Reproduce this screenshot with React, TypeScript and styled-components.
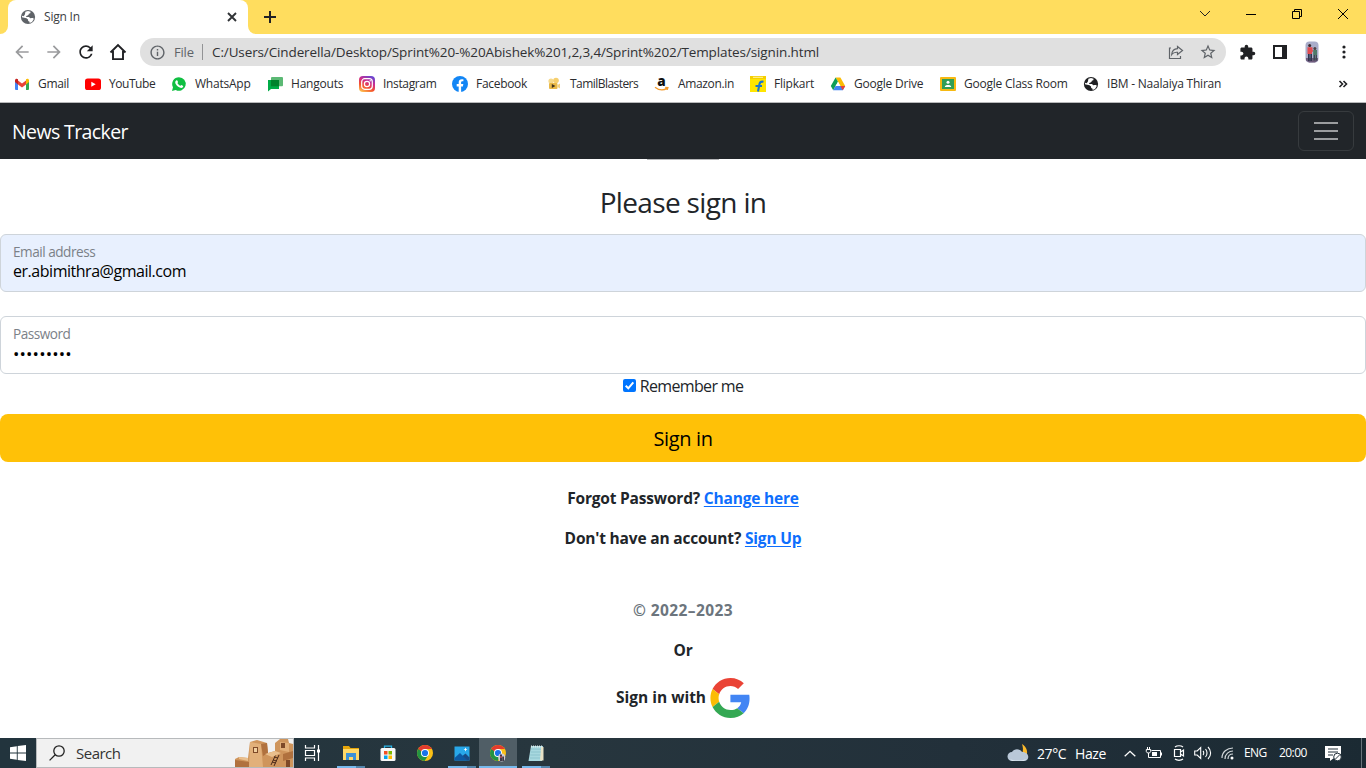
import React from "react";
import styled, { createGlobalStyle } from "styled-components";
import { MdArrowBack, MdArrowForward, MdExtension, MdInfoOutline, MdRefresh, MdStarBorder } from "react-icons/md";

const GlobalStyle = createGlobalStyle`
  * { box-sizing: border-box; }
  body { margin: 0; background: #fff; overflow: hidden; }
  body, input, button { font-family: "Open Sans", "Noto Sans", sans-serif; }
  svg { display: block; flex: none; overflow: visible; }
`;

const Screen = styled.div`
  width: 1366px;
  height: 768px;
  display: flex;
  flex-direction: column;
  overflow: hidden;
  color: #212529;
`;

/* ---------- browser chrome ---------- */
const TabStrip = styled.div`
  height: 34px;
  flex: none;
  display: flex;
  background: #ffdd5e;
`;
const TabEdge = styled.div<{ $side: "left" | "right" }>`
  width: 8px;
  background: #fff;
  &::after {
    content: "";
    display: block;
    height: 34px;
    background: #ffdd5e;
    border-radius: ${(p) => (p.$side === "left" ? "0 0 8px 0" : "0 0 0 8px")};
  }
`;
const Tab = styled.div`
  width: 240px;
  display: flex;
  align-items: center;
  padding: 0 10px 0 12px;
  background: #fff;
  border-radius: 8px 8px 0 0;
`;
const TabTitle = styled.span`
  flex: 1;
  margin-left: 8px;
  padding-bottom: 1px;
  font-size: 12px;
  letter-spacing: -0.2px;
  color: #3c4043;
`;
const NewTab = styled.div`
  width: 28px;
  display: flex;
  align-items: center;
  justify-content: center;
`;
const WindowControls = styled.div`
  margin-left: auto;
  display: flex;
  height: 28px;
`;
const WindowButton = styled.div`
  width: 46px;
  display: flex;
  align-items: center;
  justify-content: center;
`;
const Toolbar = styled.div`
  height: 36px;
  flex: none;
  display: flex;
  align-items: center;
  padding-left: 12px;
  color: #202124;
`;
const NavButton = styled.div<{ $off?: boolean }>`
  width: 20px;
  margin-right: 12px;
  display: flex;
  justify-content: center;
  color: ${(p) => (p.$off ? "#9a9b9d" : "#202124")};
`;
const Omnibox = styled.div`
  width: 1086px;
  height: 28px;
  border-radius: 14px;
  background: #e0e0e0;
  display: flex;
  align-items: center;
  padding: 0 9px 0 9px;
  color: #5f6368;
  font-size: 14px;
`;
const Scheme = styled.span`
  margin-left: 8px;
  width: 20px;
  font-size: 13px;
  letter-spacing: -0.2px;
`;
const Separator = styled.span`
  width: 1px;
  height: 16px;
  margin: 0 9px 0 8px;
  background: #929395;
`;
const Url = styled.span`
  flex: 1;
  color: #303134;
  font-size: 13.5px;
  letter-spacing: -0.12px;
  white-space: nowrap;
`;
const OmniActions = styled.div`
  display: flex;
  gap: 14px;
  align-items: center;
`;
const Extensions = styled.div`
  display: flex;
  align-items: center;
  padding-left: 13px;
`;
const ExtensionSlot = styled.div<{ $w: number }>`
  width: ${(p) => p.$w}px;
`;
const Bookmarks = styled.div`
  height: 33px;
  flex: none;
  display: flex;
  align-items: center;
  padding: 0 18px 5px 14px;
  border-bottom: 1px solid #b8b9ba;
`;
const Bookmark = styled.div<{ $w: number; $ls?: number }>`
  width: ${(p) => p.$w}px;
  flex: none;
  display: flex;
  align-items: center;
  gap: 8px;
  font-size: 12px;
  letter-spacing: ${(p) => p.$ls ?? -0.22}px;
  white-space: nowrap;
  color: #2b2c2f;
`;
const Overflow = styled.div`
  margin-left: auto;
`;

/* ---------- page ---------- */
const Navbar = styled.nav`
  height: 56px;
  flex: none;
  display: flex;
  align-items: center;
  justify-content: space-between;
  padding: 0 12px;
  background: #212529;
`;
const Brand = styled.span`
  font-size: 19.5px;
  letter-spacing: -0.6px;
  color: #fff;
`;
const Toggler = styled.button`
  width: 56px;
  height: 40px;
  padding: 0;
  display: flex;
  align-items: center;
  justify-content: center;
  background: none;
  border: 1px solid #373b3e;
  border-radius: 6px;
`;
const Page = styled.main`
  flex: 1;
  min-height: 0;
  display: flex;
  flex-direction: column;
  align-items: center;
`;
const LogoEdge = styled.div`
  width: 72px;
  height: 1px;
  flex: none;
  background: #b5b6b8;
`;
const Heading = styled.h1`
  margin: 25px 0 15px;
  height: 34px;
  font-size: 28px;
  font-weight: 400;
  line-height: 34px;
  letter-spacing: -0.65px;
`;
const Field = styled.label<{ $filled?: boolean }>`
  width: 100%;
  height: 58px;
  flex: none;
  display: flex;
  flex-direction: column;
  padding: 8px 12px;
  border: 1px solid #ced4da;
  border-radius: 6px;
  background: ${(p) => (p.$filled ? "#e8f0fe" : "#fff")};
  margin-bottom: ${(p) => (p.$filled ? 24 : 0)}px;
`;
const FieldLabel = styled.span`
  font-size: 13.6px;
  line-height: 18px;
  letter-spacing: -0.48px;
  color: #7b8188;
`;
const FieldValue = styled.span<{ $secret?: boolean }>`
  font-size: ${(p) => (p.$secret ? 17 : 16)}px;
  line-height: ${(p) => (p.$secret ? 22 : 20)}px;
  letter-spacing: ${(p) => (p.$secret ? 0.15 : -0.47)}px;
  color: #000;
`;
const Remember = styled.div`
  height: 24px;
  flex: none;
  display: flex;
  align-items: center;
  gap: 4px;
  font-size: 16px;
  letter-spacing: -0.65px;
`;
const Checkbox = styled.svg`
  margin-top: -1px;
`;
const Submit = styled.button`
  width: 100%;
  height: 48px;
  flex: none;
  margin: 16px 0 24px;
  padding: 0;
  border: 0;
  border-radius: 8px;
  background: #ffc107;
  color: #000;
  font-size: 20px;
  letter-spacing: -0.35px;
`;
const Line = styled.p<{ $gap?: number; $muted?: boolean; $ls?: number }>`
  height: 24px;
  flex: none;
  margin: 0 0 ${(p) => p.$gap ?? 16}px;
  font-size: 15.5px;
  font-weight: 700;
  line-height: 24px;
  letter-spacing: ${(p) => p.$ls ?? -0.19}px;
  color: ${(p) => (p.$muted ? "#6c757d" : "#212529")};
  white-space: nowrap;
`;
const Link = styled.a`
  color: #0d6efd;
  text-decoration: underline;
  text-underline-offset: 2px;
`;
const GoogleRow = styled.div`
  height: 40px;
  flex: none;
  display: flex;
  gap: 4px;
`;
const GoogleText = styled(Line)`
  margin: 7px 0 0;
`;

/* ---------- taskbar ---------- */
const Taskbar = styled.footer`
  height: 30px;
  flex: none;
  display: flex;
  background: linear-gradient(90deg, #22343d, #27363e 40%, #22303a 70%, #1b2a33);
  color: #fff;
`;
const Start = styled.div`
  width: 36px;
  display: flex;
  align-items: center;
  justify-content: center;
`;
const SearchBox = styled.div`
  width: 258px;
  display: flex;
  align-items: center;
  border: 1px solid #b7babc;
  background: #f1f1f1;
  padding-left: 12px;
  color: #333;
  font-size: 15px;
  letter-spacing: -0.5px;
`;
const SearchText = styled.span`
  margin-left: 11px;
  flex: 1;
`;
const Task = styled.div<{ $active?: boolean; $open?: boolean; $w?: number }>`
  width: ${(p) => p.$w ?? 37}px;
  display: flex;
  flex-direction: column;
  align-items: center;
  justify-content: space-between;
  padding-top: 6px;
  background: ${(p) => (p.$active ? "#505e66" : "transparent")};
  &::after {
    content: "";
    width: ${(p) => (p.$active ? "100%" : "28px")};
    height: 2px;
    background: ${(p) =>
      p.$active ? "#76b9ed" : p.$open ? "linear-gradient(90deg, #76b9ed 19px, #5486ac 19px)" : "transparent"};
  }
`;
const Tray = styled.div`
  margin-left: auto;
  display: flex;
  align-items: center;
  font-size: 12px;
  white-space: nowrap;
`;
const TrayItem = styled.div<{ $w: number }>`
  width: ${(p) => p.$w}px;
  flex: none;
`;
const Weather = styled(TrayItem)`
  font-size: 14px;
  letter-spacing: -0.4px;
`;
const TrayText = styled(TrayItem)`
  letter-spacing: -0.55px;
  padding-bottom: 1px;
`;
const ShowDesktop = styled.div`
  width: 5px;
  height: 30px;
  border-left: 1px solid #68747b;
`;

const Globe = ({ color }: { color: string }) => (
  <svg width="16" height="16" viewBox="0 0 16 16">
    <circle cx="8" cy="8" r="7.1" fill={color} />
    <path d="M5.4 2.7 8 2l2.6.7-.3 1.500-1.500.5-.4 1.500-1.700.5-.8 1.300h3.200l1.200 1.200 2.900-.4.5 1.500-1.700 2.700-2.400 1.100v-1.400L8.200 12 8 10.500 6.500 9.300 2 8.200 2.100 6.700l1.600.6 1.200-1.900z" fill="#fff" />
    <path d="M8.600 6.100h3l2 1.300v1.400l-3 .1L9.400 8H6.600z" fill={color} />
  </svg>
);

const GoogleG = ({ size }: { size: number }) => (
  <svg width={size} height={size} viewBox="0 0 47 48">
    <path fill="#EA4335" d="M24 9.5c3.54 0 6.71 1.22 9.21 3.6l6.85-6.85C35.9 2.38 30.47 0 24 0 14.62 0 6.51 5.38 2.56 13.22l7.98 6.19C12.43 13.72 17.74 9.5 24 9.5z" />
    <path fill="#4285F4" d="M46.98 24.55c0-1.57-.15-3.09-.38-4.55H24v9.02h12.94c-.58 2.96-2.26 5.48-4.78 7.18l7.73 6c4.51-4.18 7.09-10.36 7.09-17.65z" />
    <path fill="#FBBC05" d="M10.53 28.59c-.48-1.45-.76-2.99-.76-4.59s.27-3.14.76-4.59l-7.98-6.19C.92 16.46 0 20.12 0 24c0 3.88.92 7.54 2.56 10.78l7.97-6.19z" />
    <path fill="#34A853" d="M24 48c6.48 0 11.93-2.13 15.89-5.81l-7.73-6c-2.15 1.45-4.92 2.3-8.16 2.3-6.26 0-11.57-4.22-13.47-9.91l-7.98 6.19C6.51 42.62 14.62 48 24 48z" />
  </svg>
);

const ChromeIcon = ({ badge }: { badge?: boolean }) => (
  <svg width="18" height="18" viewBox="0 0 18 18">
    <circle cx="9" cy="9" r="8" fill="#fbc116" />
    <path d="M2.1 5A8 8 0 0 0 8.6 17L12.4 11 9 9z" fill="#229342" />
    <path d="M2.1 5A8 8 0 0 1 15.9 5H9L6 8z" fill="#e33b2e" />
    <path d="M2.1 5 5.600 11 9 9 6 8z" fill="#229342" />
    <circle cx="9" cy="9" r="4" fill="#fff" />
    <circle cx="9" cy="9" r="3.1" fill="#1a73e8" />
    {badge && (
      <>
        <ellipse cx="12.7" cy="13.5" rx="3.5" ry="4" fill="#d0ccd6" />
        <path d="M11 11.500h2v2.500h-2z" fill="#9d4a55" />
        <path d="M13.200 12.500H15V17h-1.800zM11 10.500h2V12h-2zM11 14h2v3h-2z" fill="#403a48" />
      </>
    )}
  </svg>
);

const icons: Record<string, React.ReactNode> = {
  gmail: (
    <svg width="16" height="16" viewBox="0 0 16 16">
      <path d="M1 4h3v10H2a1 1 0 0 1-1-1z" fill="#4285f4" />
      <path d="M12 4h3v9a1 1 0 0 1-1 1h-2z" fill="#34a853" />
      <path d="M4 4.400 8 7.600l4-3.200v4L8 11.500 4 8.400z" fill="#ea4335" />
      <path d="M1 4.500C1 2.800 2.800 2.300 4 3.300v5.100L1 6z" fill="#c5221f" />
      <path d="M15 4.500c0-1.700-1.800-2.200-3-1.200v5.100L15 6z" fill="#fbbc04" />
    </svg>
  ),
  youtube: (
    <svg width="16" height="16" viewBox="0 0 16 16">
      <rect y="2.500" width="16" height="11.500" rx="2.600" fill="#f00" />
      <path d="m6.300 5.700 4.400 2.500-4.400 2.500z" fill="#fff" />
    </svg>
  ),
  whatsapp: (
    <svg width="16" height="16" viewBox="0 0 16 16">
      <path d="M8 1.200A6.800 6.800 0 1 1 4.700 14L1 15l1-3.700A6.800 6.800 0 0 1 8 1.200z" fill="#10bf42" />
      <path d="M5.200 4.400c.7-.5 1.100-.2 1.300.3l.5 1.200c.1.400-.6 1-.6 1.200.5 1.200 1.600 2.200 2.800 2.700.3 0 .8-.9 1.200-.8l1.400.7c.6.3.4 1.200 0 1.600-1.300 1.100-3 .5-4.600-.6-1.700-1.200-3-2.900-3-4.400 0-.8.4-1.500 1-1.900z" fill="#fff" />
    </svg>
  ),
  hangouts: (
    <svg width="16" height="16" viewBox="0 0 16 16">
      <rect x="4" y="1" width="12" height="9.300" rx="1" fill="#5bb974" />
      <path d="M1 4h11v9H4L1 15.600z" fill="#00ac47" />
      <path d="M4 4h8v6.300H4z" fill="#00832d" />
    </svg>
  ),
  instagram: (
    <svg width="16" height="16" viewBox="0 0 16 16">
      <defs>
        <linearGradient id="ig" x1=".2" y1="1" x2=".7" y2="0">
          <stop offset="0" stopColor="#fdc04f" />
          <stop offset=".35" stopColor="#f4502f" />
          <stop offset=".65" stopColor="#cf2c8c" />
          <stop offset="1" stopColor="#6a45d0" />
        </linearGradient>
      </defs>
      <rect width="16" height="16" rx="4" fill="url(#ig)" />
      <rect x="2.700" y="2.700" width="10.600" height="10.600" rx="3" fill="none" stroke="#fff" strokeWidth="1.200" />
      <circle cx="8" cy="8" r="2.600" fill="none" stroke="#fff" strokeWidth="1.200" />
      <circle cx="11.200" cy="4.800" r=".7" fill="#fff" />
    </svg>
  ),
  facebook: (
    <svg width="16" height="16" viewBox="0 0 16 16">
      <circle cx="8" cy="8" r="8" fill="#1386f5" />
      <path d="M6.700 16v-5.600H4.700V8h2V6.300c0-2 1.200-3.100 3-3.100l1.700.1v2h-1c-1 0-1.300.6-1.300 1.200V8h2.200l-.4 2.400H9.100V16z" fill="#fff" />
    </svg>
  ),
  camera: (
    <svg width="16" height="16" viewBox="0 0 16 16">
      <circle cx="5" cy="5" r="2.600" fill="#f6d98a" />
      <circle cx="10" cy="4.500" r="2.800" fill="#f6cf6e" />
      <rect x="3" y="7" width="8.500" height="6" rx="1" fill="#e9b948" />
      <path d="m11.500 9 2.500-1.500v5L11.500 11z" fill="#f3d07c" />
      <path d="m5.800 8 3.600 2-3.600 2z" fill="#3e3320" />
    </svg>
  ),
  amazon: (
    <svg width="16" height="16" viewBox="0 0 16 16">
      <text x="3.300" y="10.200" fontFamily="Open Sans" fontWeight="800" fontSize="13.500" fill="#111">a</text>
      <path d="M1 11.200c3.700 3 8.300 3.400 12.200 1.200M11.200 11.500l2.700.1-.7 2.300" fill="none" stroke="#f39a2b" strokeWidth="1.300" />
    </svg>
  ),
  flipkart: (
    <svg width="16" height="16" viewBox="0 0 16 16">
      <path d="M0 0h16v3H0z" fill="#f5cf00" />
      <path d="M0 3h16v13H0z" fill="#ffe500" />
      <path d="M3 1.300h10" stroke="#fff3a0" />
      <path d="M13.500 5.700c-2.600-.5-3.600.4-4 2.200L8 15.500M5.500 10h6.500" fill="none" stroke="#1976d2" strokeWidth="2.100" />
    </svg>
  ),
  drive: (
    <svg width="16" height="16" viewBox="0 0 16 16">
      <path d="M5.600 1.500h4.800L15.200 10h-4.800z" fill="#fbbc04" />
      <path d="M5.600 1.500 8 5.700 3.200 14.200.8 10z" fill="#0f9d58" />
      <path d="M5.600 10h9.600l-2.400 4.200H3.200z" fill="#4285f4" />
      <path d="m10.400 10h4.800l-2.400 4.200z" fill="#ea4335" />
      <path d="M8 5.700 10.400 10H5.600z" fill="#fff" />
    </svg>
  ),
  classroom: (
    <svg width="16" height="16" viewBox="0 0 16 16">
      <rect y="1" width="16" height="14" rx="1" fill="#f6b912" />
      <rect x="2" y="3" width="12" height="10" fill="#2f9e57" />
      <circle cx="8" cy="6.300" r="1.500" fill="#fff" />
      <path d="M4.800 11c0-2.600 6.400-2.600 6.400 0z" fill="#fff" />
    </svg>
  ),
  ibm: <Globe color="#202124" />,
};

const bookmarks = [
  { id: "gmail", label: "Gmail", w: 71, ls: -0.3 },
  { id: "youtube", label: "YouTube", w: 86, ls: -0.45 },
  { id: "whatsapp", label: "WhatsApp", w: 96 },
  { id: "hangouts", label: "Hangouts", w: 92 },
  { id: "instagram", label: "Instagram", w: 93, ls: -0.35 },
  { id: "facebook", label: "Facebook", w: 94, ls: -0.3 },
  { id: "camera", label: "TamilBlasters", w: 108, ls: -0.55 },
  { id: "amazon", label: "Amazon.in", w: 96, ls: -0.35 },
  { id: "flipkart", label: "Flipkart", w: 80 },
  { id: "drive", label: "Google Drive", w: 110 },
  { id: "classroom", label: "Google Class Room", w: 143 },
  { id: "ibm", label: "IBM - Naalaiya Thiran", w: 140 },
];

const Browser = () => (
  <>
    <TabStrip>
      <TabEdge $side="left" />
      <Tab>
        <Globe color="#5f6368" />
        <TabTitle>Sign In</TabTitle>
        <svg width="12" height="12" viewBox="0 0 12 12"><path d="m2 2 8 8m0-8-8 8" stroke="#303336" strokeWidth="1.900" /></svg>
      </Tab>
      <TabEdge $side="right" />
      <NewTab>
        <svg width="12" height="12" viewBox="0 0 12 12"><path d="M6 0v12M0 6h12" stroke="#202124" strokeWidth="2" /></svg>
      </NewTab>
      <WindowControls>
        <WindowButton><svg width="12" height="8" viewBox="0 0 12 8"><path d="m1 1 5 5 5-5" fill="none" stroke="#222" /></svg></WindowButton>
        <WindowButton><svg width="10" height="10" viewBox="0 0 10 10"><path d="M0 5.500h10" stroke="#000" /></svg></WindowButton>
        <WindowButton><svg width="10" height="10" viewBox="0 0 10 10"><path d="M.5 2.500h7v7h-7zM2.500 2.500v-2h7v7h-2" fill="none" stroke="#000" /></svg></WindowButton>
        <WindowButton><svg width="12" height="12" viewBox="0 0 12 12"><path d="m1 1 10 10M11 1 1 11" stroke="#000" /></svg></WindowButton>
      </WindowControls>
    </TabStrip>
    <Toolbar>
      <NavButton $off><MdArrowBack size={20} /></NavButton>
      <NavButton $off><MdArrowForward size={20} /></NavButton>
      <NavButton><MdRefresh size={20} /></NavButton>
      <NavButton>
        <svg width="18" height="18" viewBox="0 0 18 18"><path d="M1.500 9.500 9 2l7.500 7.500M4 8v8.100h10V8" fill="none" stroke="currentColor" strokeWidth="1.900" /></svg>
      </NavButton>
      <Omnibox>
        <MdInfoOutline size={17} />
        <Scheme>File</Scheme>
        <Separator />
        <Url>C:/Users/Cinderella/Desktop/Sprint%20-%20Abishek%201,2,3,4/Sprint%202/Templates/signin.html</Url>
        <OmniActions>
          <svg width="18" height="16" viewBox="0 0 18 16"><path d="M4 4H2.500v10.500h11V12M10.500 2.500l5 4-5 4V8.300C7.800 8 6 8.700 4.700 10.500 5 7.200 7 5 10.500 4.700z" fill="none" stroke="#5f6368" strokeWidth="1.200" /></svg>
          <MdStarBorder size={18} />
        </OmniActions>
      </Omnibox>
      <Extensions>
        <ExtensionSlot $w={34}><MdExtension size={17} /></ExtensionSlot>
        <ExtensionSlot $w={32}>
          <svg width="14" height="14" viewBox="0 0 14 14"><path d="M0 0h14v14H0zM2 2v10h7V2z" fill="#202124" fillRule="evenodd" /></svg>
        </ExtensionSlot>
        <ExtensionSlot $w={37}>
          <svg width="14" height="22" viewBox="0 0 14 22">
            <rect x=".5" y=".5" width="13" height="21" rx="4" fill="#a9adca" />
            <path d="M1 17h12v2.500L10 21.500H4l-3-2z" fill="#6f5b7c" />
            <circle cx="4.700" cy="4.500" r="1.500" fill="#3b2a30" />
            <path d="M2.500 6.300h5v3h.6v1.400H7V13H2.500z" fill="#e24b50" />
            <path d="M3 13h1.700v7H3zM5.300 13H7v7H5.300z" fill="#30364f" />
            <circle cx="9.900" cy="7.600" r="1.500" fill="#4a4345" />
            <path d="M8.200 9h3.800v5H8.200z" fill="#4f7a68" /><path d="M8.400 14H10v5.500H8.400zM10.400 14H12v5.500h-1.600z" fill="#3d4a52" />
          </svg>
        </ExtensionSlot>
        <svg width="4" height="14" viewBox="0 0 4 14"><circle cx="2" cy="2" r="1.600" fill="#202124" /><circle cx="2" cy="7" r="1.600" fill="#202124" /><circle cx="2" cy="12" r="1.600" fill="#202124" /></svg>
      </Extensions>
    </Toolbar>
    <Bookmarks>
      {bookmarks.map((b) => (
        <Bookmark key={b.id} $w={b.w} $ls={b.ls}>{icons[b.id]}{b.label}</Bookmark>
      ))}
      <Overflow>
        <svg width="10" height="8" viewBox="0 0 10 8"><path d="m1.500 1 3 3-3 3m4-6 3 3-3 3" fill="none" stroke="#202124" strokeWidth="1.600" /></svg>
      </Overflow>
    </Bookmarks>
  </>
);

const SignInPage = () => (
  <>
    <Navbar>
      <Brand>News Tracker</Brand>
      <Toggler aria-label="Toggle navigation">
        <svg width="24" height="18" viewBox="0 0 24 18"><path d="M0 1h24M0 9h24M0 17h24" stroke="#9b9d9f" strokeWidth="2" /></svg>
      </Toggler>
    </Navbar>
    <Page>
      <LogoEdge />
      <Heading>Please sign in</Heading>
      <Field $filled>
        <FieldLabel>Email address</FieldLabel>
        <FieldValue>er.abimithra@gmail.com</FieldValue>
      </Field>
      <Field>
        <FieldLabel>Password</FieldLabel>
        <FieldValue $secret>•••••••••</FieldValue>
      </Field>
      <Remember>
        <Checkbox width="13" height="13" viewBox="0 0 13 13"><rect width="13" height="13" rx="2" fill="#0075ff" /><path d="m2.700 6.700 2.600 2.600 5-6" fill="none" stroke="#fff" strokeWidth="2" /></Checkbox>
        Remember me
      </Remember>
      <Submit>Sign in</Submit>
      <Line>Forgot Password? <Link>Change here</Link></Line>
      <Line $gap={48}>Don't have an account? <Link>Sign Up</Link></Line>
      <Line $muted $ls={0.4}>© 2022–2023</Line>
      <Line>Or</Line>
      <GoogleRow>
        <GoogleText $ls={0}>Sign in with</GoogleText>
        <GoogleG size={40} />
      </GoogleRow>
    </Page>
  </>
);

const DesktopBar = () => (
  <Taskbar>
    <Start>
      <svg width="16" height="16" viewBox="0 0 16 16"><path d="M0 2.200 6.800 1.200v6.300H0zM7.700 1.100 16 0v7.500H7.700zM0 8.400h6.800v6.400L0 13.800zM7.700 8.400H16V16l-8.300-1.100z" fill="#fff" /></svg>
    </Start>
    <SearchBox>
      <svg width="16" height="16" viewBox="0 0 16 16"><circle cx="10" cy="6" r="5.200" fill="none" stroke="#222" strokeWidth="1.300" /><path d="M6.200 9.700.6 15.400" stroke="#222" strokeWidth="1.300" /></svg>
      <SearchText>Search</SearchText>
      <svg width="58" height="28" viewBox="0 0 58 28">
        <path d="M0 20 4 18l9 1L15 3l7-2 10 3 1 10 7-2V4l5-4h8l1 4 4 1v23H0z" fill="#cf955c" />
        <path d="M15 3 26 5l2 23H14zM45 3l9 1v9l-9-2z" fill="#e2b07a" />
        <path d="m26 5 6-1 1 10-5 3zM0 21l14 2v5H0zM48 15l10-3v7l-10 3z" fill="#b0713e" />
        <path d="M18 8h5v6h-5zM46 4h4v5h-4zM51 21h4v7h-4z" fill="#7e4928" />
        <path d="M19 9h3v4h-3z" fill="#f1cf9f" />
        <path d="m36 26 5-11m-2 12 5-11m-5 2 4 1m-5 2 4 1m-5 1 4 1" stroke="#4e2c1b" />
        <path d="m30 15 10-3 6 2-9 4zM4 18l9 1v3l-9-2z" fill="#eabf8d" />
      </svg>
    </SearchBox>
    <Task $w={36}>
      <svg width="18" height="18" viewBox="0 0 18 18"><path d="M2.500 1v3h9V1M2.500 17v-3h9v3M2.500 6.500h9v5h-9zM15.500 1v16" fill="none" stroke="#fff" strokeWidth="1.200" /><path d="M14 5.500h3v3h-3z" fill="#fff" /></svg>
    </Task>
    <Task $w={41} $open>
      <svg width="18" height="18" viewBox="0 0 18 18"><path d="M1 2h6l1.500 2H17v3H1z" fill="#e5a50a" /><path d="M1 5h16v11H1z" fill="#ffd866" /><path d="M4 9h10v7h-3v-3H7v3H4z" fill="#3c91d6" /></svg>
    </Task>
    <Task $w={34}>
      <svg width="18" height="18" viewBox="0 0 18 18"><path d="M5.500 5V2.200h7V5" fill="none" stroke="#2bb5e8" strokeWidth="1.300" /><rect x="1.500" y="4" width="15" height="13" rx="1.500" fill="#f7f7f7" /><path d="M5 7h3.500v3.500H5z" fill="#f25022" /><path d="M9.500 7H13v3.500H9.500z" fill="#7fba00" /><path d="M5 11.500h3.500V15H5z" fill="#00a4ef" /><path d="M9.500 11.500H13V15H9.500z" fill="#ffb900" /></svg>
    </Task>
    <Task $w={40}><ChromeIcon /></Task>
    <Task $w={34} $open>
      <svg width="18" height="18" viewBox="0 0 18 18"><path d="M1.500 2.500h15v14h-15z" fill="#28a8ea" /><path d="m1.500 14 5.500-5 7.500 7.500h-13z" fill="#0c59a4" /><path d="m9.500 12 3-2.500 4 4v3H14z" fill="#174a86" /><path d="m12.500 3.500.6 1.400 1.400.6-1.400.6-.6 1.400-.6-1.400-1.400-.6 1.400-.6z" fill="#fff" /></svg>
    </Task>
    <Task $w={38} $active><ChromeIcon badge /></Task>
    <Task $w={38} $open>
      <svg width="18" height="18" viewBox="0 0 18 18"><path d="M4 2h12l-1 15H1.500z" fill="#a7d8df" /><path d="M14 3h2.500v13.500H13z" fill="#e8e2c6" /><path d="m4 5 10 .2M3.700 8h10M3.300 11h10M3 14h10" stroke="#8cc3cd" /><path d="M4 2.500h12" stroke="#dce9eb" strokeDasharray="1 1" strokeWidth="2" /></svg>
    </Task>
    <Tray>
      <TrayItem $w={30}>
        <svg width="22" height="20" viewBox="0 0 22 20"><path d="M15 1c5 3 7 9 3 14h-7c5-3 6-8 4-14z" fill="#fbb92b" /><path d="M5 18a4.500 4.500 0 0 1 0-9 6 6 0 0 1 10 0c8 0 8 9 2 9z" fill="#b9c8d8" /><path d="M3 16c5 2 11 2 16 0-1 1.500-2 2-4 2H5z" fill="#dce5ed" /></svg>
      </TrayItem>
      <Weather $w={38}>27°C</Weather>
      <Weather $w={49}>Haze</Weather>
      <TrayItem $w={22}><svg width="12" height="7" viewBox="0 0 12 7"><path d="m.7 6.300 5.300-5 5.300 5" fill="none" stroke="#fff" strokeWidth="1.300" /></svg></TrayItem>
      <TrayItem $w={27}><svg width="16" height="12" viewBox="0 0 16 12"><path d="M5.500 3.500h9v7H5M15.500 5.500v3M1.500 0v2M3.500 0v2M.3 2.500h4.400v2L3.500 6h-2L.3 4.500zM2.500 6v4.500H5" fill="none" stroke="#fff" /><path d="M6 5h5v4H6z" fill="#fff" /></svg></TrayItem>
      <TrayItem $w={21}><svg width="12" height="16" viewBox="0 0 12 16"><path d="M1.500 4.500h6v7h-6zM7.500 7l3-2v6l-3-2M2 2c2-1.700 6-1.700 8 0M2 14c2 1.700 6 1.700 8 0" fill="none" stroke="#fff" strokeWidth="1.200" /></svg></TrayItem>
      <TrayItem $w={27}><svg width="18" height="14" viewBox="0 0 18 14"><path d="M.7 5h2.500l3.500-3.500v11L3.200 9H.7zM9 5c1 1 1 3 0 4M11.500 3c2 2.200 2 5.800 0 8M14 1c3.500 3.500 3.500 8.500 0 12" fill="none" stroke="#fff" strokeWidth="1.100" /></svg></TrayItem>
      <TrayItem $w={23}><svg width="14" height="13" viewBox="0 0 14 13"><path d="M1 11C1 5 6 1 12 1M4 12C4 7 8 4 12 4M7 12c0-3 2-5 5-5" fill="none" stroke="#d2d7da" strokeWidth="1.200" /><circle cx="11" cy="11" r="1.500" fill="#fff" /></svg></TrayItem>
      <TrayText $w={35}>ENG</TrayText>
      <TrayText $w={46}>20:00</TrayText>
      <TrayItem $w={36}><svg width="17" height="17" viewBox="0 0 17 17"><path d="M0 1h16v12H9l-4 3v-3H0z" fill="#fff" /><path d="M3 4h10M3 7h10M3 10h5" stroke="#22303a" strokeWidth="1.200" /><circle cx="12.500" cy="12" r="3.800" fill="#fff" stroke="#22303a" /><path d="M10 14.500 15 9.500" stroke="#22303a" /></svg></TrayItem>
      <ShowDesktop />
    </Tray>
  </Taskbar>
);

export default function App() {
  return (
    <Screen>
      <GlobalStyle />
      <Browser />
      <SignInPage />
      <DesktopBar />
    </Screen>
  );
}
